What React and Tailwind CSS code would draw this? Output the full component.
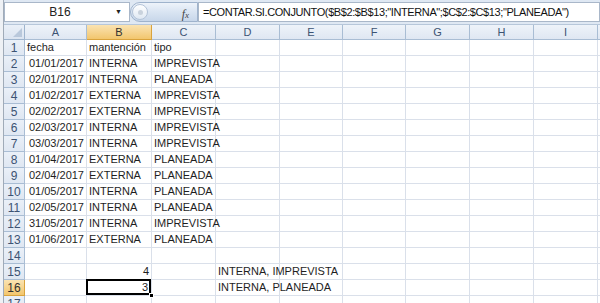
import React from "react";

const colW = ["w-[21px]", "w-[62px]", "w-[65px]", "w-[64px]", "w-[64px]", "w-[63px]", "w-[63px]", "w-[64px]", "w-[64px]", "w-[64px]"];
const letters = ["A", "B", "C", "D", "E", "F", "G", "H", "I"];

const data = [
  ["fecha", "mantención", "tipo", false],
  ["01/01/2017", "INTERNA", "IMPREVISTA", true],
  ["02/01/2017", "INTERNA", "PLANEADA", true],
  ["01/02/2017", "EXTERNA", "IMPREVISTA", true],
  ["02/02/2017", "EXTERNA", "IMPREVISTA", true],
  ["02/03/2017", "INTERNA", "IMPREVISTA", true],
  ["03/03/2017", "INTERNA", "IMPREVISTA", true],
  ["01/04/2017", "EXTERNA", "PLANEADA", true],
  ["02/04/2017", "EXTERNA", "PLANEADA", true],
  ["01/05/2017", "INTERNA", "PLANEADA", true],
  ["02/05/2017", "INTERNA", "PLANEADA", true],
  ["31/05/2017", "INTERNA", "IMPREVISTA", true],
  ["01/06/2017", "EXTERNA", "PLANEADA", true],
];

function Cell({ i, children, right, extra = "" }) {
  return (
    <div
      className={`${colW[i + 1]} shrink-0 h-full border-r border-b border-[#dae0ea] px-[2px] flex items-center whitespace-nowrap ${right ? "justify-end" : ""} ${extra}`}
    >
      {children}
    </div>
  );
}

function RowHeader({ n, active }) {
  return (
    <div
      className={`${colW[0]} shrink-0 h-full flex items-center justify-center border-r border-b text-[12px] ${
        active
          ? "bg-gradient-to-b from-[#fae3b1] to-[#f2c66d] border-[#d9a33d] text-[#303030]"
          : "bg-gradient-to-b from-[#eaf0f8] to-[#dfe7f2] border-[#a9bdd4] text-[#3c5373]"
      }`}
    >
      {n}
    </div>
  );
}

function Row({ n, cells, active }) {
  return (
    <div className="flex h-[16px] shrink-0">
      <RowHeader n={n} active={active} />
      {cells}
      <div className="flex-1 h-full border-b border-[#dae0ea]" />
    </div>
  );
}

export default function App() {
  const rows = [];
  data.forEach((r, idx) => {
    const n = idx + 1;
    rows.push(
      <Row
        key={n}
        n={n}
        cells={letters.map((_, i) => {
          if (i === 0) return <Cell key={i} i={i} right={r[3]}>{r[0]}</Cell>;
          if (i === 1) return <Cell key={i} i={i}>{r[1]}</Cell>;
          if (i === 2) return <Cell key={i} i={i}>{r[2]}</Cell>;
          return <Cell key={i} i={i} />;
        })}
      />
    );
  });
  rows.push(<Row key={14} n={14} cells={letters.map((_, i) => <Cell key={i} i={i} />)} />);
  rows.push(
    <Row
      key={15}
      n={15}
      cells={letters.map((_, i) => {
        if (i === 1) return <Cell key={i} i={i} right>4</Cell>;
        if (i === 3) return <Cell key={i} i={i} extra="overflow-visible">INTERNA, IMPREVISTA</Cell>;
        return <Cell key={i} i={i} />;
      })}
    />
  );
  rows.push(
    <Row
      key={16}
      n={16}
      active
      cells={letters.map((_, i) => {
        if (i === 1)
          return (
            <Cell key={i} i={i} right extra="relative">
              <span className="pr-[1px]">3</span>
              <div className="absolute -left-[1px] -top-[1px] right-0 bottom-0 border-2 border-black" />
              <div className="absolute -right-[3px] -bottom-[3px] w-[5px] h-[5px] bg-black border border-white" />
            </Cell>
          );
        if (i === 3) return <Cell key={i} i={i}>INTERNA, PLANEADA</Cell>;
        return <Cell key={i} i={i} />;
      })}
    />
  );
  rows.push(<Row key={17} n={17} cells={letters.map((_, i) => <Cell key={i} i={i} />)} />);

  return (
    <div className="w-[600px] h-[303px] overflow-hidden bg-white flex text-[#1e1e1e] font-['Liberation_Sans',Arial,sans-serif] text-[11px]">
      <div className="w-[4px] shrink-0 bg-[#eef1f5] border-r border-[#a0abb8]" />
      <div className="flex-1 flex flex-col min-w-0">
        {/* formula bar */}
        <div className="h-[25px] shrink-0 bg-[#dfe8f3] flex pt-[2px] pb-[2px] border-b border-[#b7c7da]">
          <div className="w-[126px] shrink-0 bg-white border border-[#a9b7c9] flex items-center relative">
            <span className="flex-1 text-center text-[12px] text-[#222]">B16</span>
            <span className="w-[14px] text-[7px] text-[#222]">▼</span>
          </div>
          <div className="w-[68px] shrink-0 h-full rounded-l-full bg-gradient-to-b from-[#eef3fa] via-[#d9e4f2] to-[#c8d7ea] border border-[#9fb3cc] flex items-center relative">
            <div className="ml-[1px] w-[16px] h-[16px] rounded-full bg-gradient-to-b from-[#ffffff] to-[#dfe8f3] border border-[#b3c3d8] flex items-center justify-center">
              <div className="w-[5px] h-[5px] rounded-full bg-[#c9d2dd]" />
            </div>
            <span className="absolute right-[8px] top-[2px] italic font-['Liberation_Serif',serif] text-[12px] text-[#444]">
              f<span className="text-[9px]">x</span>
            </span>
          </div>
          <div className="flex-1 bg-white border border-[#a9b7c9] flex items-center pl-[4px] text-[11px] tracking-[-0.4px] text-[#111] whitespace-nowrap overflow-hidden">
            =CONTAR.SI.CONJUNTO($B$2:$B$13;"INTERNA";$C$2:$C$13;"PLANEADA")
          </div>
        </div>
        {/* column headers */}
        <div className="flex h-[15px] shrink-0">
          <div className={`${colW[0]} shrink-0 h-full bg-gradient-to-b from-[#eaf0f8] to-[#dbe4f0] border-r border-b border-[#9eb4cd] relative`}>
            <svg className="absolute right-[2px] bottom-[2px]" width="9" height="9" viewBox="0 0 9 9">
              <polygon points="9,0 9,9 0,9" fill="#b9c8db" />
            </svg>
          </div>
          {letters.map((l, i) => (
            <div
              key={l}
              className={`${colW[i + 1]} shrink-0 h-full flex items-center justify-center border-r border-b text-[11px] ${
                i === 1
                  ? "bg-gradient-to-b from-[#fae3b1] to-[#f2c66d] border-[#d9a33d] text-[#303030]"
                  : "bg-gradient-to-b from-[#eef3f9] to-[#dfe7f2] border-[#a9bdd4] text-[#3c5373]"
              }`}
            >
              {l}
            </div>
          ))}
          <div className="flex-1 h-full bg-gradient-to-b from-[#eef3f9] to-[#dfe7f2] border-b border-[#a9bdd4]" />
        </div>
        {rows}
      </div>
    </div>
  );
}
